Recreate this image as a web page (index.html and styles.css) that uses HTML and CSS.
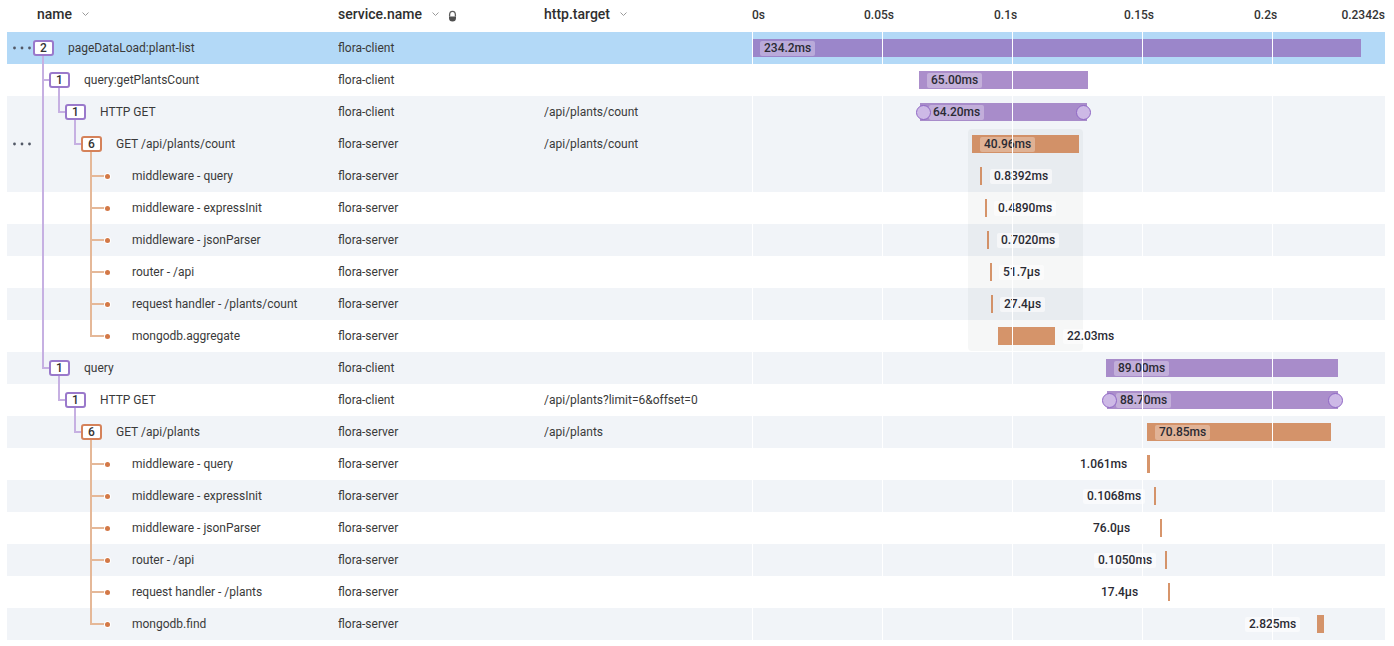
FILE: index.html
```html
<!DOCTYPE html>
<html lang="en">
<head>
<meta charset="utf-8">
<title>Trace</title>
<link rel="stylesheet" href="styles.css">
</head>
<body>
<div class="trace">
  <div class="thead">
    <div class="th th-name">name<svg class="chev" width="7" height="4" viewBox="0 0 7 4"><polyline points="0.5,0.5 3.5,3.5 6.5,0.5"/></svg></div>
    <div class="th th-svc">service.name<svg class="chev" width="7" height="4" viewBox="0 0 7 4"><polyline points="0.5,0.5 3.5,3.5 6.5,0.5"/></svg><svg class="bucket" width="9" height="12" viewBox="0 0 9 12"><path class="b-top" d="M1.6 6.6 V5 A2.9 3.6 0 0 1 7.4 5 V6.6"/><path class="b-fill" d="M1 6.4 H8 V8 A3.5 3.6 0 0 1 1 8 Z"/></svg></div>
    <div class="th th-http">http.target<svg class="chev" width="7" height="4" viewBox="0 0 7 4"><polyline points="0.5,0.5 3.5,3.5 6.5,0.5"/></svg></div>
    <div class="th th-axis">
      <span class="tick" style="left:0px">0s</span>
      <span class="tick" style="left:112px">0.05s</span>
      <span class="tick" style="left:242px">0.1s</span>
      <span class="tick" style="left:372px">0.15s</span>
      <span class="tick" style="left:502px">0.2s</span>
      <span class="tick tick-end">0.2342s</span>
    </div>
  </div>

  <div class="tbody">
    <!-- 1 -->
    <div class="row selected">
      <div class="cell name"><span class="more"><svg width="26" height="32" viewBox="0 0 26 32"><circle cx="7.5" cy="16" r="1.4"/><circle cx="15" cy="16" r="1.4"/><circle cx="22.5" cy="16" r="1.4"/></svg></span><span class="node down p"><span class="badge p">2</span></span><span class="lbl-name">pageDataLoad:plant-list</span></div>
      <div class="cell">flora-client</div>
      <div class="cell"></div>
      <div class="cell tl"><span class="bar p" style="left:0px;width:609px"></span><span class="pill in" style="left:8px">234.2ms</span></div>
    </div>
    <!-- 2 -->
    <div class="row">
      <div class="cell name"><span class="more"></span><span class="g tee p"></span><span class="node down p"><span class="badge p">1</span></span><span class="lbl-name">query:getPlantsCount</span></div>
      <div class="cell">flora-client</div>
      <div class="cell"></div>
      <div class="cell tl"><span class="bar p" style="left:167px;width:169px"></span><span class="pill in" style="left:175px">65.00ms</span></div>
    </div>
    <!-- 3 -->
    <div class="row alt">
      <div class="cell name"><span class="more"></span><span class="g pass p"></span><span class="g elbow p"></span><span class="node down p"><span class="badge p">1</span></span><span class="lbl-name">HTTP GET</span></div>
      <div class="cell">flora-client</div>
      <div class="cell">/api/plants/count</div>
      <div class="cell tl"><span class="bar p" style="left:168px;width:167px"></span><span class="pill in" style="left:177px">64.20ms</span><span class="handle" style="left:164px"></span><span class="handle" style="left:324px"></span></div>
    </div>
    <!-- 4 -->
    <div class="row alt">
      <div class="cell name"><span class="more"><svg width="26" height="32" viewBox="0 0 26 32"><circle cx="7.5" cy="16" r="1.4"/><circle cx="15" cy="16" r="1.4"/><circle cx="22.5" cy="16" r="1.4"/></svg></span><span class="g pass p"></span><span class="g"></span><span class="g elbow p"></span><span class="node down o"><span class="badge o">6</span></span><span class="lbl-name">GET /api/plants/count</span></div>
      <div class="cell">flora-server</div>
      <div class="cell">/api/plants/count</div>
      <div class="cell tl"><span class="bar o" style="left:220px;width:107px"></span><span class="pill in" style="left:228px">40.96ms</span></div>
    </div>
    <!-- 5 -->
    <div class="row alt">
      <div class="cell name"><span class="more"></span><span class="g pass p"></span><span class="g"></span><span class="g"></span><span class="g tee o"></span><span class="node leaf"></span><span class="lbl-name">middleware - query</span></div>
      <div class="cell">flora-server</div>
      <div class="cell"></div>
      <div class="cell tl"><span class="bar o" style="left:228px;width:2px"></span><span class="pill out" style="left:238px">0.8392ms</span></div>
    </div>
    <!-- 6 -->
    <div class="row">
      <div class="cell name"><span class="more"></span><span class="g pass p"></span><span class="g"></span><span class="g"></span><span class="g tee o"></span><span class="node leaf"></span><span class="lbl-name">middleware - expressInit</span></div>
      <div class="cell">flora-server</div>
      <div class="cell"></div>
      <div class="cell tl"><span class="bar o" style="left:233px;width:2px"></span><span class="pill out" style="left:242px">0.4890ms</span></div>
    </div>
    <!-- 7 -->
    <div class="row alt">
      <div class="cell name"><span class="more"></span><span class="g pass p"></span><span class="g"></span><span class="g"></span><span class="g tee o"></span><span class="node leaf"></span><span class="lbl-name">middleware - jsonParser</span></div>
      <div class="cell">flora-server</div>
      <div class="cell"></div>
      <div class="cell tl"><span class="bar o" style="left:235px;width:2px"></span><span class="pill out" style="left:245px">0.7020ms</span></div>
    </div>
    <!-- 8 -->
    <div class="row">
      <div class="cell name"><span class="more"></span><span class="g pass p"></span><span class="g"></span><span class="g"></span><span class="g tee o"></span><span class="node leaf"></span><span class="lbl-name">router - /api</span></div>
      <div class="cell">flora-server</div>
      <div class="cell"></div>
      <div class="cell tl"><span class="bar o" style="left:238px;width:2px"></span><span class="pill out" style="left:247px">51.7µs</span></div>
    </div>
    <!-- 9 -->
    <div class="row alt">
      <div class="cell name"><span class="more"></span><span class="g pass p"></span><span class="g"></span><span class="g"></span><span class="g tee o"></span><span class="node leaf"></span><span class="lbl-name">request handler - /plants/count</span></div>
      <div class="cell">flora-server</div>
      <div class="cell"></div>
      <div class="cell tl"><span class="bar o" style="left:239px;width:2px"></span><span class="pill out" style="left:248px">27.4µs</span></div>
    </div>
    <!-- 10 -->
    <div class="row">
      <div class="cell name"><span class="more"></span><span class="g pass p"></span><span class="g"></span><span class="g"></span><span class="g elbow o"></span><span class="node leaf"></span><span class="lbl-name">mongodb.aggregate</span></div>
      <div class="cell">flora-server</div>
      <div class="cell"></div>
      <div class="cell tl"><span class="bar o" style="left:246px;width:57px"></span><span class="pill out" style="left:311px">22.03ms</span></div>
    </div>
    <!-- 11 -->
    <div class="row alt">
      <div class="cell name"><span class="more"></span><span class="g elbow p"></span><span class="node down p"><span class="badge p">1</span></span><span class="lbl-name">query</span></div>
      <div class="cell">flora-client</div>
      <div class="cell"></div>
      <div class="cell tl"><span class="bar p" style="left:354px;width:232px"></span><span class="pill in" style="left:362px">89.00ms</span></div>
    </div>
    <!-- 12 -->
    <div class="row">
      <div class="cell name"><span class="more"></span><span class="g"></span><span class="g elbow p"></span><span class="node down p"><span class="badge p">1</span></span><span class="lbl-name">HTTP GET</span></div>
      <div class="cell">flora-client</div>
      <div class="cell">/api/plants?limit=6&amp;offset=0</div>
      <div class="cell tl"><span class="bar p" style="left:355px;width:231px"></span><span class="pill in" style="left:364px">88.70ms</span><span class="handle" style="left:350px"></span><span class="handle" style="left:576px"></span></div>
    </div>
    <!-- 13 -->
    <div class="row alt">
      <div class="cell name"><span class="more"></span><span class="g"></span><span class="g"></span><span class="g elbow p"></span><span class="node down o"><span class="badge o">6</span></span><span class="lbl-name">GET /api/plants</span></div>
      <div class="cell">flora-server</div>
      <div class="cell">/api/plants</div>
      <div class="cell tl"><span class="bar o" style="left:395px;width:184px"></span><span class="pill in" style="left:403px">70.85ms</span></div>
    </div>
    <!-- 14 -->
    <div class="row">
      <div class="cell name"><span class="more"></span><span class="g"></span><span class="g"></span><span class="g"></span><span class="g tee o"></span><span class="node leaf"></span><span class="lbl-name">middleware - query</span></div>
      <div class="cell">flora-server</div>
      <div class="cell"></div>
      <div class="cell tl"><span class="bar o" style="left:395px;width:3px"></span><span class="pill out" style="left:324px">1.061ms</span></div>
    </div>
    <!-- 15 -->
    <div class="row alt">
      <div class="cell name"><span class="more"></span><span class="g"></span><span class="g"></span><span class="g"></span><span class="g tee o"></span><span class="node leaf"></span><span class="lbl-name">middleware - expressInit</span></div>
      <div class="cell">flora-server</div>
      <div class="cell"></div>
      <div class="cell tl"><span class="bar o" style="left:402px;width:2px"></span><span class="pill out" style="left:331px">0.1068ms</span></div>
    </div>
    <!-- 16 -->
    <div class="row">
      <div class="cell name"><span class="more"></span><span class="g"></span><span class="g"></span><span class="g"></span><span class="g tee o"></span><span class="node leaf"></span><span class="lbl-name">middleware - jsonParser</span></div>
      <div class="cell">flora-server</div>
      <div class="cell"></div>
      <div class="cell tl"><span class="bar o" style="left:408px;width:2px"></span><span class="pill out" style="left:337px">76.0µs</span></div>
    </div>
    <!-- 17 -->
    <div class="row alt">
      <div class="cell name"><span class="more"></span><span class="g"></span><span class="g"></span><span class="g"></span><span class="g tee o"></span><span class="node leaf"></span><span class="lbl-name">router - /api</span></div>
      <div class="cell">flora-server</div>
      <div class="cell"></div>
      <div class="cell tl"><span class="bar o" style="left:413px;width:2px"></span><span class="pill out" style="left:342px">0.1050ms</span></div>
    </div>
    <!-- 18 -->
    <div class="row">
      <div class="cell name"><span class="more"></span><span class="g"></span><span class="g"></span><span class="g"></span><span class="g tee o"></span><span class="node leaf"></span><span class="lbl-name">request handler - /plants</span></div>
      <div class="cell">flora-server</div>
      <div class="cell"></div>
      <div class="cell tl"><span class="bar o" style="left:416px;width:2px"></span><span class="pill out" style="left:345px">17.4µs</span></div>
    </div>
    <!-- 19 -->
    <div class="row alt">
      <div class="cell name"><span class="more"></span><span class="g"></span><span class="g"></span><span class="g"></span><span class="g elbow o"></span><span class="node leaf"></span><span class="lbl-name">mongodb.find</span></div>
      <div class="cell">flora-server</div>
      <div class="cell"></div>
      <div class="cell tl"><span class="bar o" style="left:565px;width:7px"></span><span class="pill out" style="left:493px">2.825ms</span></div>
    </div>

    <div class="focus" aria-hidden="true"></div>
    <div class="gridlines" aria-hidden="true">
      <span class="gl" style="left:0px"></span>
      <span class="gl" style="left:130px"></span>
      <span class="gl" style="left:260px"></span>
      <span class="gl" style="left:390px"></span>
      <span class="gl" style="left:520px"></span>
    </div>
  </div>
</div>
</body>
</html>
```

FILE: styles.css
```css
* { box-sizing: border-box; }

body {
  margin: 0;
  background: #ffffff;
  font-family: Roboto, "Liberation Sans", Arial, sans-serif;
  color: #3a3a3a;
}

.trace {
  padding-left: 7px;
  width: 1385px;
}

/* ---------- header ---------- */
.thead {
  display: grid;
  grid-template-columns: 331px 206px 208px 633px;
  height: 32px;
  font-size: 14px;
  font-weight: 500;
  color: #2f2f2f;
}

.th {
  display: flex;
  align-items: center;
  height: 28px;
  line-height: 28px;
  min-width: 0;
}

.th-name { padding-left: 30px; }

.chev {
  margin-left: 10px;
  fill: none;
  stroke: #9a9a9a;
  stroke-width: 1;
}

.bucket { margin-left: 9px; margin-top: 3px; }
.bucket .b-top { fill: none; stroke: #5f5f5f; stroke-width: 1.3; }
.bucket .b-fill { fill: #4f4f4f; }

.th-axis {
  position: relative;
  display: block;
  height: 32px;
  font-size: 12px;
  color: #333333;
}

.tick {
  position: absolute;
  top: 8px;
  line-height: 14px;
  white-space: nowrap;
}

.tick-end { right: 0; }

/* ---------- body ---------- */
.tbody {
  position: relative;
  z-index: 0;
}

.row {
  display: grid;
  grid-template-columns: 331px 206px 208px 633px;
  height: 32px;
  background: #ffffff;
  font-size: 12px;
  line-height: 32px;
  color: #3a3a3a;
}

.row.alt { background: #f1f4f8; }
.row.selected { background: #b3d9f7; }

.cell {
  white-space: nowrap;
  overflow: hidden;
  min-width: 0;
}

.cell.name {
  display: flex;
  align-items: stretch;
  overflow: visible;
}

.more {
  flex: none;
  width: 26px;
  height: 32px;
  display: flex;
}

.more svg circle { fill: #525866; }

/* tree guides */
.p { --c: #c6b0e2; --b: #9a79cb; }
.o { --c: #e5b898; --b: #d5825a; }

.g {
  flex: none;
  width: 16px;
  height: 32px;
  position: relative;
}

.g.pass::before,
.g.tee::before,
.g.elbow::before {
  content: "";
  position: absolute;
  left: 9px;
  width: 2px;
  top: 0;
  bottom: 0;
  background: var(--c);
}

.g.elbow::before { bottom: auto; height: 17px; }

.g.tee::after,
.g.elbow::after {
  content: "";
  position: absolute;
  left: 9px;
  right: 0;
  top: 15px;
  height: 2px;
  background: var(--c);
}

.node {
  flex: none;
  width: 21px;
  height: 32px;
  position: relative;
  display: flex;
  align-items: center;
}

.node.down::after {
  content: "";
  position: absolute;
  left: 9px;
  width: 2px;
  top: 24px;
  bottom: 0;
  background: var(--c);
}

.badge {
  width: 21px;
  height: 16px;
  border: 2px solid var(--b);
  border-radius: 3px;
  background: #ffffff;
  font-size: 12px;
  font-weight: 500;
  line-height: 12px;
  color: #333333;
  text-align: center;
}

.node.leaf::before {
  content: "";
  position: absolute;
  left: 0;
  width: 10px;
  top: 15px;
  height: 2px;
  background: #e5b898;
}

.node.leaf::after {
  content: "";
  position: absolute;
  left: 8px;
  top: 13.5px;
  width: 5px;
  height: 5px;
  border-radius: 50%;
  background: #d37846;
  box-shadow: 0 0 0 1px #ffffff;
}

.lbl-name { margin-left: 14px; }

/* timeline */
.cell.tl {
  position: relative;
  overflow: visible;
}

.bar {
  position: absolute;
  top: 7px;
  height: 18px;
  z-index: 2;
}

.bar.p { background: rgba(148, 112, 189, 0.79); }
.bar.o { background: rgba(204, 120, 67, 0.79); }

.pill {
  position: absolute;
  top: 8.5px;
  height: 15px;
  line-height: 15px;
  padding: 0 4px;
  border-radius: 2px;
  font-size: 12px;
  font-weight: 500;
  color: #2a2a33;
  white-space: nowrap;
  z-index: 3;
}

.pill.in { background: rgba(255, 255, 255, 0.3); }
.pill.out { background: rgba(255, 255, 255, 0.55); }

.handle {
  position: absolute;
  top: 8.5px;
  width: 15px;
  height: 15px;
  border-radius: 50%;
  background: #cdb9e6;
  border: 1.5px solid #8f67c5;
  z-index: 4;
}

.focus {
  position: absolute;
  left: 961px;
  top: 97px;
  width: 115px;
  height: 222px;
  border-radius: 4px;
  background: rgba(40, 60, 80, 0.045);
  z-index: 1;
  pointer-events: none;
}

.gridlines {
  position: absolute;
  left: 745px;
  top: 0;
  bottom: 0;
  width: 633px;
  z-index: 5;
  pointer-events: none;
}

.gl {
  position: absolute;
  top: 0;
  bottom: 0;
  width: 1px;
  background: #ffffff;
}
```
